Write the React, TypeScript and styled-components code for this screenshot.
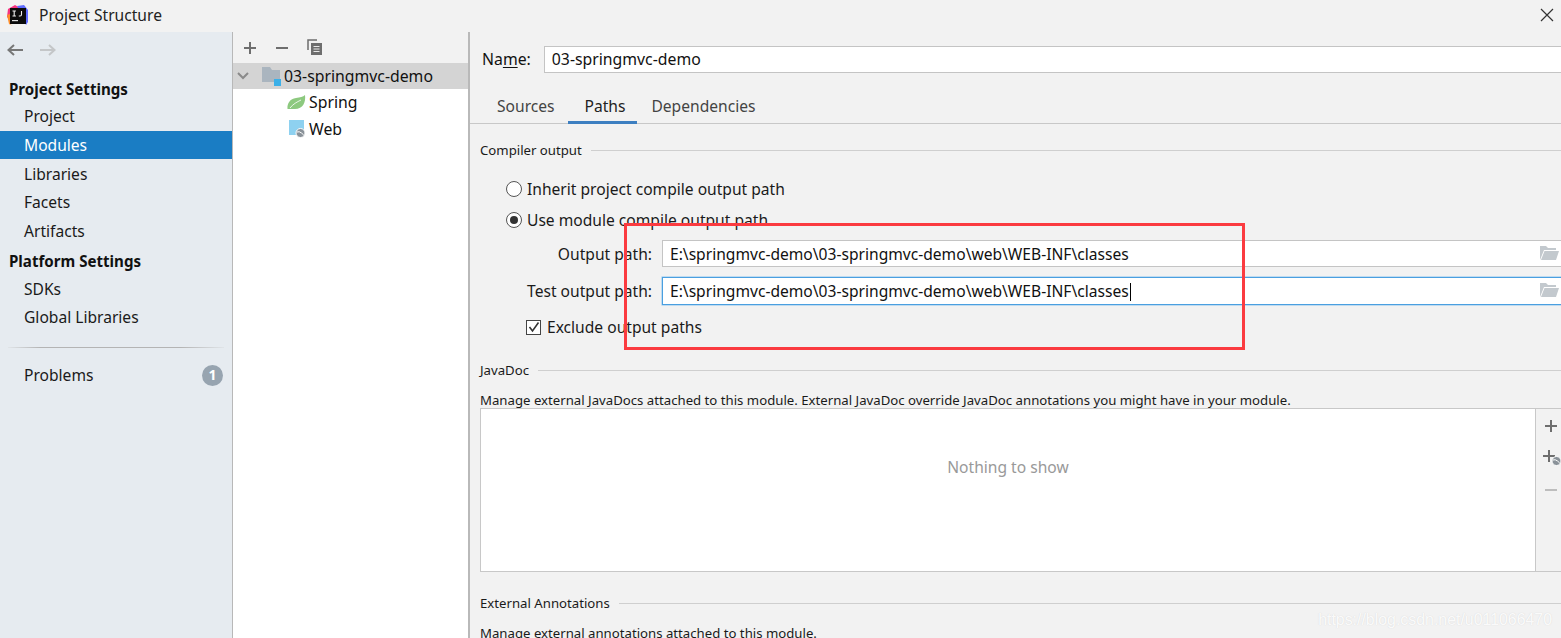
import React from "react";
import styled, { createGlobalStyle } from "styled-components";

const Global = createGlobalStyle`
  html, body { margin: 0; padding: 0; width: 1561px; height: 638px; overflow: hidden; background: #f2f2f2; }
  body { font-family: "Noto Sans", "Open Sans", "Liberation Sans", sans-serif; font-size: 15.6px; color: #111; }
  #root { width: 1561px; height: 638px; }
  * { box-sizing: border-box; }
`;

const Page = styled.div`
  position: relative; width: 1561px; height: 638px; display: flex; flex-direction: column; overflow: hidden; background: #f2f2f2;
`;
const TitleBar = styled.header`
  height: 32px; display: flex; align-items: center; padding: 0 7px 2px 7px; gap: 11px; flex: none;
`;
const Title = styled.span`
  font-size: 15.6px; color: #222; flex: 1;
`;
const Body = styled.div`
  flex: 1; display: flex; min-height: 0;
`;
const Sidebar = styled.nav`
  width: 233px; flex: none; background: #e6ebf0; border-right: 1px solid #b8b8b8; display: flex; flex-direction: column;
`;
const NavArrows = styled.div`
  height: 36px; display: flex; align-items: center; padding: 0 0 0 6px; gap: 15px;
`;
const SectionHead = styled.div<{ $top?: number }>`
  font-weight: 700; font-size: 15.1px; color: #111; padding-left: 9px; height: 27px; line-height: 29px; margin-top: ${p => p.$top ?? 0}px;
`;
const NavItem = styled.div<{ $active?: boolean }>`
  height: 28.7px; line-height: 28px; padding-left: 24px; display: flex; align-items: center; justify-content: space-between; padding-right: 9px;
  background: ${p => (p.$active ? "#1a7dc4" : "transparent")};
  color: ${p => (p.$active ? "#fff" : "#1a1a1a")};
`;
const NavRule = styled.hr`
  border: 0; height: 1px; margin: 15px 8px 13px; background: linear-gradient(90deg, #e0e4e8, #b4b4b4 15%, #b4b4b4 80%, #e0e4e8);
`;
const Badge = styled.span`
  width: 21px; height: 21px; border-radius: 50%; background: #97a4b0; color: #fff; font-weight: 700; font-size: 14px; display: flex; align-items: center; justify-content: center;
`;
const Middle = styled.section`
  width: 235px; flex: none; background: #fff; display: flex; flex-direction: column;
`;
const MidToolbar = styled.div`
  height: 31px; background: #f2f2f2; display: flex; align-items: center; padding-left: 10px; gap: 18px; flex: none;
`;
const TreeRow = styled.div<{ $selected?: boolean; $indent: number }>`
  height: 26px; margin-bottom: ${p => (p.$selected ? 0 : 1)}px; display: flex; align-items: center; padding-left: ${p => p.$indent}px; gap: 3px; font-size: 15.8px;
  background: ${p => (p.$selected ? "#d4d4d4" : "transparent")}; color: #111;
`;
const Divider = styled.div`
  width: 2px; flex: none; background: #b9b9b9;
`;
const Right = styled.main`
  flex: 1; min-width: 0; overflow: hidden; padding-top: 14px; display: flex; flex-direction: column;
`;
const NameRow = styled.div`
  display: flex; align-items: center; height: 26px; padding-left: 12px; gap: 13px; font-size: 15.8px;
`;
const Underlined = styled.span`
  text-decoration: underline; text-underline-offset: 2px;
`;
const TextInput = styled.div<{ $focus?: boolean }>`
  flex: 1; margin-right: -4px; height: ${p => (p.$focus ? 28 : 27)}px; background: #fff; border: 1px solid ${p => (p.$focus ? "#4a9fe0" : "#c4c4c4")};
  ${p => (p.$focus ? "box-shadow: 0 0 0 0.5px #8cc3ee;" : "")}
  display: flex; align-items: center; padding-left: 7px; padding-right: 5px; justify-content: space-between; position: relative; color: #111;
`;
const Caret = styled.span`
  display: inline-block; width: 1px; height: 18px; background: #000; vertical-align: -4px; margin-left: 1px;
`;
const Tabs = styled.div`
  display: flex; height: 38px; margin-top: 14px; border-bottom: 1px solid #c8c8c8; padding-left: 13px; flex: none;
`;
const Tab = styled.div<{ $active?: boolean }>`
  padding: 5px ${p => (p.$active ? 12 : 14)}px 0 ${p => (p.$active ? 17 : 14)}px; margin-left: ${p => (p.$active ? -1 : 0)}px; height: 38px; display: flex; align-items: center; color: ${p => (p.$active ? "#222" : "#444")};
  border-bottom: 3px solid ${p => (p.$active ? "#3d7fc1" : "transparent")}; margin-bottom: -1px;
`;
const Section = styled.div<{ $top: number }>`
  display: flex; align-items: center; gap: 9px; padding-left: 10px; height: 18px; margin-top: ${p => p.$top}px; font-size: 13.2px; color: #1a1a1a; flex: none;
`;
const Rule = styled.div`
  flex: 1; height: 1px; background: #cfcfcf;
`;
const RadioRow = styled.div<{ $top: number }>`
  display: flex; align-items: center; gap: 5px; padding-left: 36px; height: 22px; margin-top: ${p => p.$top}px; color: #1a1a1a; flex: none;
`;
const Radio = styled.span<{ $on?: boolean }>`
  width: 16px; height: 16px; border-radius: 50%; background: #fff; border: 1px solid #555; display: flex; align-items: center; justify-content: center;
  &::after { content: ""; width: 8px; height: 8px; border-radius: 50%; background: ${p => (p.$on ? "#333" : "transparent")}; }
`;
const PathRow = styled.div<{ $top: number }>`
  display: flex; align-items: center; height: 27px; margin-top: ${p => p.$top}px; flex: none;
`;
const PathLabel = styled.label`
  width: 192px; flex: none; text-align: right; padding-right: 10px; color: #1a1a1a; white-space: nowrap;
`;
const CheckRow = styled.div`
  display: flex; align-items: center; gap: 6px; padding-left: 56px; height: 22px; margin-top: 12px; color: #1a1a1a; flex: none;
`;
const CheckBox = styled.span`
  width: 15px; height: 15px; background: #fff; border: 1px solid #444; display: flex; align-items: center; justify-content: center;
`;
const Small = styled.div<{ $top: number }>`
  font-size: 13.2px; height: 18px; line-height: 18px; padding-left: 10px; margin-top: ${p => p.$top}px; color: #1a1a1a; white-space: nowrap; flex: none;
`;
const TableWrap = styled.div`
  margin: 0 0 0 10px; height: 164px; margin-top: -1px; display: flex; border-bottom: 1px solid #c8c8c8; flex: none;
`;
const EmptyList = styled.div`
  width: 1056px; flex: none; background: #fff; border: 1px solid #c8c8c8; border-bottom: 0; display: flex; align-items: center; justify-content: center; color: #999; padding-bottom: 46px;
`;
const TableTools = styled.div`
  flex: 1; display: flex; flex-direction: column; padding-top: 1px; border-top: 1px solid #c8c8c8;
`;
const ToolCell = styled.div`
  height: 32px; display: flex; align-items: center; padding-left: 8px;
`;
const RedBox = styled.div`
  position: absolute; left: 624px; top: 223px; width: 621px; height: 127px; border: 3px solid #fb3b40; pointer-events: none;
`;
const Watermark = styled.div`
  position: absolute; right: 9px; top: 611px; font-family: "Liberation Sans", sans-serif; font-size: 15.9px; color: rgba(255,255,255,0.9); text-shadow: 0 0 1px rgba(190,190,190,0.6); white-space: nowrap;
`;

const Logo = () => (
  <svg width="21" height="21" viewBox="0 0 21 21">
    <path d="M1 4 L8 0 L13 3 L3 15 L0 12 Z" fill="#f5347f" />
    <path d="M0 10 L3 9 L3 19 L6 21 L2 19 Z" fill="#fd8d2a" />
    <path d="M10 1 L17 0 L21 5 L21 17 L19 20 L15 10 Z" fill="#5f6bff" />
    <rect x="3" y="3" width="16" height="16" fill="#0b0b0b" />
    <rect x="5" y="15" width="6" height="1.2" fill="#ddd" />
    <path d="M5.5 6h3.4M7.2 6v5M5.5 11h3.4M14.5 6v3.6q0 1.4-1.4 1.4h-1.3" stroke="#eee" strokeWidth="1.1" fill="none" />
  </svg>
);
const Close = () => (
  <svg width="14" height="14" viewBox="0 0 14 14"><path d="M1 1 L13 13 M13 1 L1 13" stroke="#333" strokeWidth="1.2" /></svg>
);
const Arrow = ({ dir, color }: { dir: "l" | "r"; color: string }) => (
  <svg width="18" height="14" viewBox="0 0 18 14" style={{ transform: dir === "r" ? "scaleX(-1)" : undefined }}>
    <path d="M17 7 H3 M8 2 L2.5 7 L8 12" stroke={color} strokeWidth="2" fill="none" />
  </svg>
);
const Plus = ({ color = "#6e6e6e" }: { color?: string }) => (
  <svg width="14" height="14" viewBox="0 0 14 14"><path d="M7 1 V13 M1 7 H13" stroke={color} strokeWidth="2" /></svg>
);
const Minus = ({ color = "#6e6e6e" }: { color?: string }) => (
  <svg width="14" height="14" viewBox="0 0 14 14"><path d="M1 7 H13" stroke={color} strokeWidth="2" /></svg>
);
const Copy = () => (
  <svg width="16" height="17" viewBox="0 0 16 17">
    <path d="M1 11 V1 H10" stroke="#6e6e6e" strokeWidth="1.5" fill="none" />
    <rect x="4" y="4" width="11" height="12" fill="#6e6e6e" />
    <path d="M6.5 7.5h6M6.5 10h6M6.5 12.5h6" stroke="#e8e8e8" strokeWidth="1" />
  </svg>
);
const Chevron = () => (
  <svg width="12" height="8" viewBox="0 0 12 8" style={{ marginRight: 10 }}><path d="M1 1 L6 6 L11 1" stroke="#8a8a8a" strokeWidth="2" fill="none" /></svg>
);
const ModuleFolder = () => (
  <svg width="19" height="19" viewBox="0 0 19 19">
    <path d="M0 0 H8 L10 3 H18 V15 H0 Z" fill="#aab5bf" />
    <rect x="12" y="12" width="7" height="7" fill="#3cb0e8" />
  </svg>
);
const Leaf = () => (
  <svg width="19" height="15" viewBox="0 0 19 15">
    <path d="M0.5 14 C0 8 3 4 9 3 C13 2.5 16 2 18 0 C19 7 16 14 8 14 C5 14 2 14 0.5 14 Z" fill="#8dc97f" />
    <path d="M3 13 C6 9 10 7 14 5" stroke="#fff" strokeWidth="0.8" fill="none" />
  </svg>
);
const Globe = ({ x, y, s }: { x: number; y: number; s: number }) => (
  <g>
    <circle cx={x} cy={y} r={s} fill="#8a9299" stroke="#fff" strokeWidth="1" />
    <path d={`M${x - s + 1} ${y - 1} q${s / 2} -1 ${s} 1 t${s / 2} 2`} stroke="#fff" strokeWidth="1" fill="none" />
  </g>
);
const WebIcon = () => (
  <svg width="18" height="18" viewBox="0 0 18 18">
    <rect x="1" y="0" width="15" height="15" fill="#8ed1f0" />
    <Globe x={12.5} y={13} s={4.5} />
  </svg>
);
const PlusGlobe = () => (
  <svg width="20" height="18" viewBox="0 0 20 18" style={{ marginLeft: -2 }}>
    <path d="M7 1 V13 M1 7 H13" stroke="#6e6e6e" strokeWidth="2" />
    <Globe x={14.5} y={12} s={4.5} />
  </svg>
);
const FolderOpen = () => (
  <svg width="19" height="15" viewBox="0 0 19 15">
    <path d="M0 14 V0 H6 L8 2 H16 V4 H4 Z" fill="#c3c9ce" />
    <path d="M1 14 L4.5 5 H19 L16 14 Z" fill="#c3c9ce" />
  </svg>
);

const paths = "E:\\springmvc-demo\\03-springmvc-demo\\web\\WEB-INF\\classes";

export default function App() {
  return (
    <Page>
      <Global />
      <TitleBar>
        <Logo />
        <Title>Project Structure</Title>
        <Close />
      </TitleBar>
      <Body>
        <Sidebar>
          <NavArrows>
            <Arrow dir="l" color="#777" />
            <Arrow dir="r" color="#c4c6c8" />
          </NavArrows>
          <SectionHead $top={7}>Project Settings</SectionHead>
          <NavItem>Project</NavItem>
          <NavItem $active>Modules</NavItem>
          <NavItem>Libraries</NavItem>
          <NavItem>Facets</NavItem>
          <NavItem>Artifacts</NavItem>
          <SectionHead $top={2}>Platform Settings</SectionHead>
          <NavItem>SDKs</NavItem>
          <NavItem>Global Libraries</NavItem>
          <NavRule />
          <NavItem>Problems<Badge>1</Badge></NavItem>
        </Sidebar>
        <Middle>
          <MidToolbar>
            <Plus />
            <Minus />
            <Copy />
          </MidToolbar>
          <TreeRow $selected $indent={4}>
            <Chevron />
            <ModuleFolder />
            03-springmvc-demo
          </TreeRow>
          <TreeRow $indent={54}><Leaf />Spring</TreeRow>
          <TreeRow $indent={55}><WebIcon />Web</TreeRow>
        </Middle>
        <Divider />
        <Right>
          <NameRow>
            <span>Na<Underlined>m</Underlined>e:</span>
            <TextInput>03-springmvc-demo</TextInput>
          </NameRow>
          <Tabs>
            <Tab>Sources</Tab>
            <Tab $active>Paths</Tab>
            <Tab>Dependencies</Tab>
          </Tabs>
          <Section $top={17}>Compiler output<Rule /></Section>
          <RadioRow $top={19}><Radio />Inherit project compile output path</RadioRow>
          <RadioRow $top={9}><Radio $on />Use module compile output path</RadioRow>
          <PathRow $top={9}>
            <PathLabel>Output path:</PathLabel>
            <TextInput>{paths}<FolderOpen /></TextInput>
          </PathRow>
          <PathRow $top={10}>
            <PathLabel>Test output path:</PathLabel>
            <TextInput $focus><span>{paths}<Caret /></span><FolderOpen /></TextInput>
          </PathRow>
          <CheckRow>
            <CheckBox>
              <svg width="12" height="12" viewBox="0 0 12 12"><path d="M1.5 6 L4.5 10 L10.5 1.5" stroke="#333" strokeWidth="1.6" fill="none" /></svg>
            </CheckBox>
            Exclude output paths
          </CheckRow>
          <Section $top={23}>JavaDoc<Rule /></Section>
          <Small $top={12}>Manage external JavaDocs attached to this module. External JavaDoc override JavaDoc annotations you might have in your module.</Small>
          <TableWrap>
            <EmptyList>Nothing to show</EmptyList>
            <TableTools>
              <ToolCell><Plus /></ToolCell>
              <ToolCell><PlusGlobe /></ToolCell>
              <ToolCell><Minus color="#bdbdbd" /></ToolCell>
            </TableTools>
          </TableWrap>
          <Section $top={22}>External Annotations<Rule /></Section>
          <Small $top={12}>Manage external annotations attached to this module.</Small>
        </Right>
      </Body>
      <RedBox />
      <Watermark>https://blog.csdn.net/u011066470</Watermark>
    </Page>
  );
}
